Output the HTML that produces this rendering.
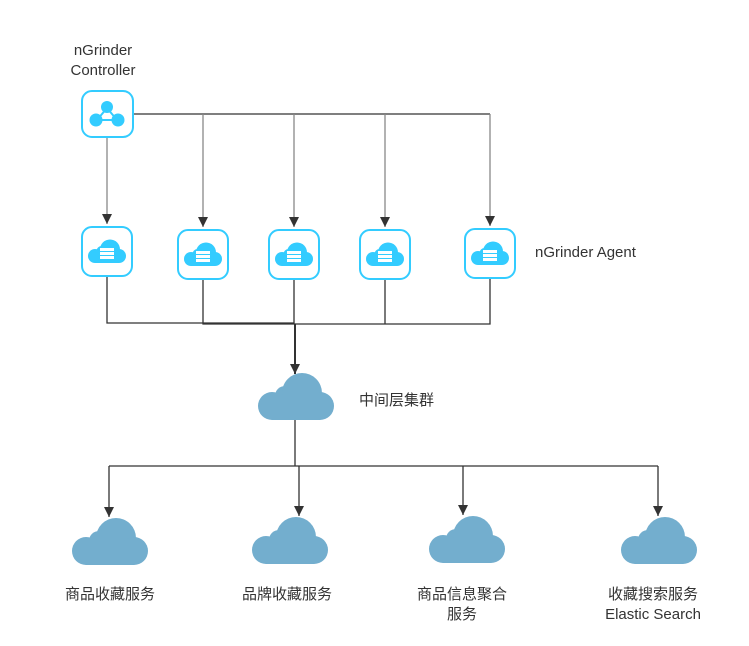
<!DOCTYPE html>
<html><head><meta charset="utf-8"><style>
body{margin:0;background:#fff;width:749px;height:646px;overflow:hidden;position:relative;font-family:"Liberation Sans","Noto Sans CJK SC",sans-serif;color:#333;font-size:15px}
.t{position:absolute;text-align:center;line-height:20px;white-space:nowrap}
svg{position:absolute;left:0;top:0}
</style></head><body>
<svg width="749" height="646" viewBox="0 0 749 646">
<defs>
<g id="cl"><circle cx="14" cy="34" r="14"/><circle cx="27" cy="24" r="10"/><circle cx="44" cy="21" r="20"/><circle cx="62" cy="34" r="14"/><rect x="14" y="24" width="48" height="24"/></g>
<marker id="ar" viewBox="0 0 10 10" refX="10" refY="5" markerWidth="10" markerHeight="10" markerUnits="userSpaceOnUse" orient="auto"><path d="M0,0 L10,5 L0,10z" fill="#333"/></marker>
<g id="ag"><rect x="1" y="1" width="50" height="49" rx="10" fill="#fff" stroke="#33ccff" stroke-width="2"/>
<g fill="#33ccff" transform="translate(7,13) scale(0.5)"><use href="#cl"/></g>
<g fill="#fff"><rect x="19" y="22" width="14" height="3"/><rect x="19" y="26" width="14" height="3"/><rect x="19" y="30" width="14" height="3"/></g></g>
</defs>
<g stroke="#333" fill="none" stroke-width="1.3">
<path d="M133 114H490"/>
<path d="M107 137V224" stroke="#888" marker-end="url(#ar)"/>
<path d="M203 114V227" stroke="#888" marker-end="url(#ar)"/>
<path d="M294 114V227" stroke="#888" marker-end="url(#ar)"/>
<path d="M385 114V227" stroke="#888" marker-end="url(#ar)"/>
<path d="M490 114V226" stroke="#888" marker-end="url(#ar)"/>
<path d="M107 277V323H294M203 279V324H490V277M294 279V324M385 279V324"/>
<path d="M295 324V374" stroke-width="2" marker-end="url(#ar)"/>
<path d="M295 420V466M109 466H658"/>
<path d="M109 466V517" marker-end="url(#ar)"/>
<path d="M299 466V516" marker-end="url(#ar)"/>
<path d="M463 466V515" marker-end="url(#ar)"/>
<path d="M658 466V516" marker-end="url(#ar)"/>
</g>
<g transform="translate(81,90)"><rect x="1" y="1" width="51" height="46" rx="10" fill="#fff" stroke="#33ccff" stroke-width="2"/>
<path d="M26 18L16 30H36Z" fill="none" stroke="#33ccff" stroke-width="2"/>
<g fill="#33ccff"><circle cx="26" cy="17" r="6"/><circle cx="15" cy="30" r="6.5"/><circle cx="37" cy="30" r="6.5"/></g></g>
<use href="#ag" x="81" y="226"/>
<use href="#ag" x="177" y="229"/>
<use href="#ag" x="268" y="229"/>
<use href="#ag" x="359" y="229"/>
<use href="#ag" x="464" y="228"/>
<g fill="#73aece">
<use href="#cl" x="258" y="372"/>
<use href="#cl" x="72" y="517"/>
<use href="#cl" x="252" y="516"/>
<use href="#cl" x="429" y="515"/>
<use href="#cl" x="621" y="516"/>
</g>
</svg>
<div class="t" style="left:53px;top:41px;width:100px">nGrinder<br>Controller</div>
<div class="t" style="left:535px;top:243px">nGrinder Agent</div>
<div class="t" style="left:359px;top:391px">中间层集群</div>
<div class="t" style="left:40px;top:585px;width:140px">商品收藏服务</div>
<div class="t" style="left:217px;top:585px;width:140px">品牌收藏服务</div>
<div class="t" style="left:392px;top:585px;width:140px">商品信息聚合<br>服务</div>
<div class="t" style="left:583px;top:585px;width:140px">收藏搜索服务<br>Elastic Search</div>
</body></html>
